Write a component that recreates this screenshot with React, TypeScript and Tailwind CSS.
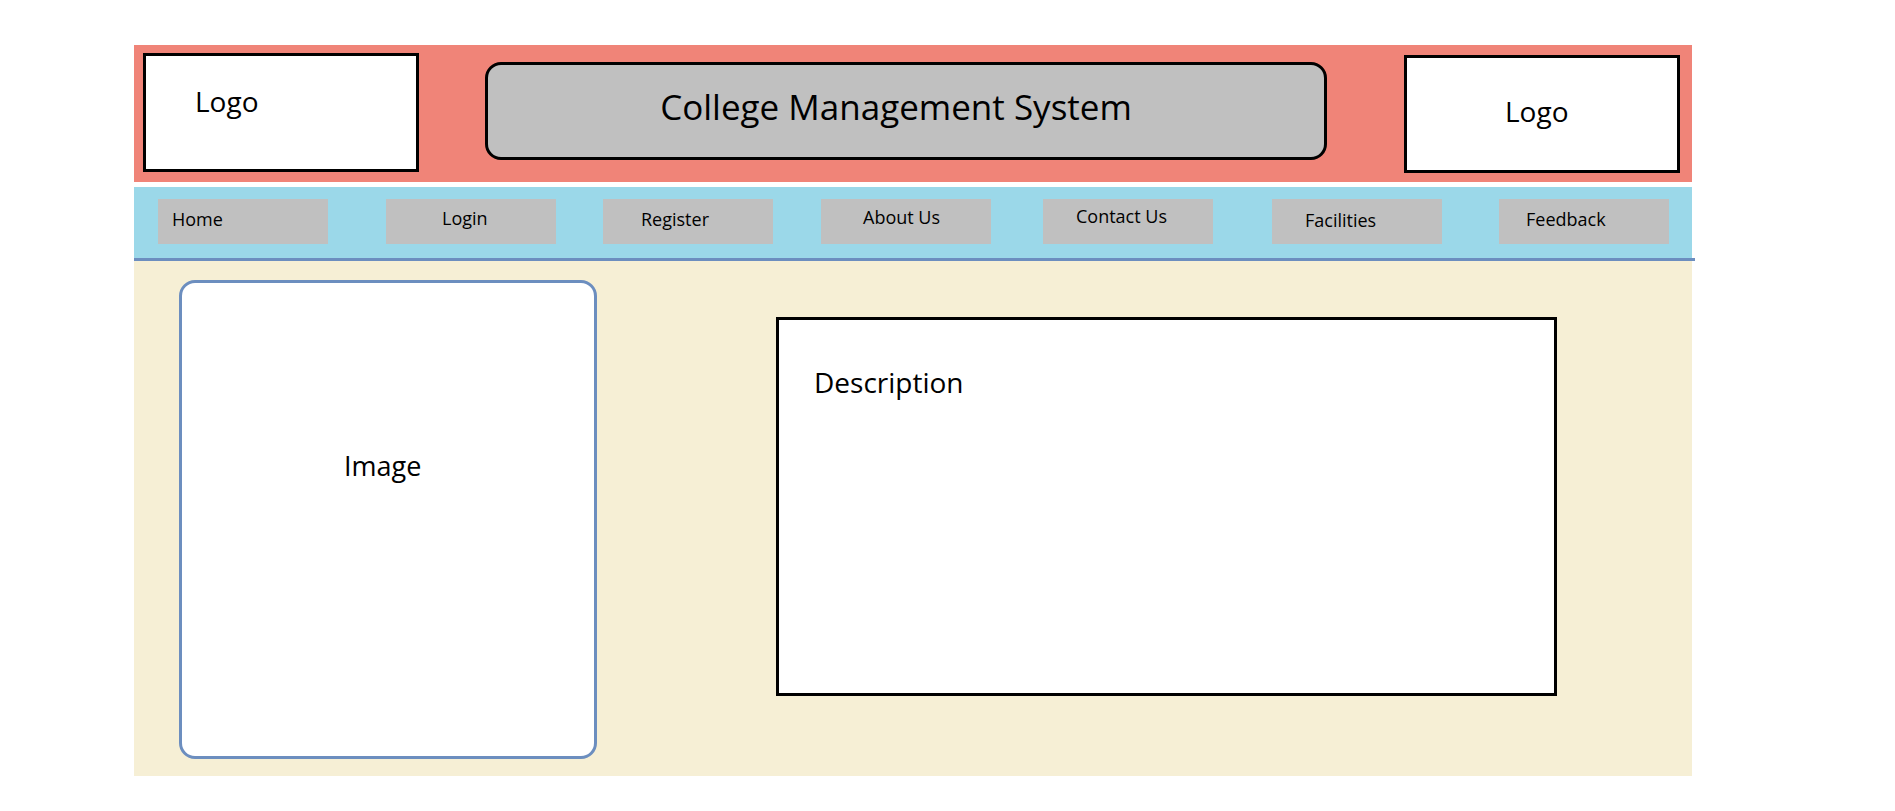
const navItems = [
  { label: "Home", ml: "ml-[24px]", pl: "pl-[14px]", pt: "pt-[11px]" },
  { label: "Login", ml: "ml-[58px]", pl: "pl-[56px]", pt: "pt-[10px]" },
  { label: "Register", ml: "ml-[47px]", pl: "pl-[38px]", pt: "pt-[11px]" },
  { label: "About Us", ml: "ml-[48px]", pl: "pl-[42px]", pt: "pt-[9px]" },
  { label: "Contact Us", ml: "ml-[52px]", pl: "pl-[33px]", pt: "pt-[8px]" },
  { label: "Facilities", ml: "ml-[59px]", pl: "pl-[33px]", pt: "pt-[12px]" },
  { label: "Feedback", ml: "ml-[57px]", pl: "pl-[27px]", pt: "pt-[11px]" },
];

/** College Management System wireframe */
export default function App() {
  return (
    <div
      className="min-h-[811px] bg-white pl-[134px] pt-[45px] text-black"
      style={{ fontFamily: '"Open Sans", "Noto Sans", sans-serif' }}
    >
      {/* header */}
      <div className="flex h-[137px] w-[1558px] items-start bg-[#f08478]">
        <div className="ml-[9px] mt-[8px] h-[119px] w-[276px] border-[3px] border-black bg-white pl-[49px] pt-[31px] text-[28px] leading-none">
          Logo
        </div>
        <div className="ml-[66px] mt-[17px] h-[98px] w-[842px] rounded-[16px] border-[3px] border-black bg-[#c0c0c0] pr-[20px] pt-[24px] text-center text-[35px] leading-none">
          College Management System
        </div>
        <div className="ml-[77px] mt-[10px] h-[118px] w-[276px] border-[3px] border-black bg-white pl-[98px] pt-[39px] text-[28px] leading-none">
          Logo
        </div>
      </div>

      {/* nav */}
      <div className="mt-[5px] flex h-[71px] w-[1558px] items-start bg-[#9bd8e9] pt-[12px]">
        {navItems.map((n) => (
          <div
            key={n.label}
            className={`${n.ml} ${n.pl} ${n.pt} h-[45px] w-[170px] shrink-0 bg-[#c0c0c0] text-[18px] leading-none`}
          >
            {n.label}
          </div>
        ))}
      </div>
      <div className="h-[3px] w-[1561px] bg-[#6c8ebf]" />

      {/* content */}
      <div className="flex h-[515px] w-[1558px] items-start bg-[#f6efd5]">
        <div className="ml-[45px] mt-[19px] h-[479px] w-[418px] rounded-[16px] border-[3px] border-[#6c8ebf] bg-white pl-[162px] pt-[169px] text-[27px] leading-none">
          Image
        </div>
        <div className="ml-[179px] mt-[56px] h-[379px] w-[781px] border-[3px] border-black bg-white pl-[35px] pt-[48px] text-[28px] leading-none">
          Description
        </div>
      </div>
    </div>
  );
}
